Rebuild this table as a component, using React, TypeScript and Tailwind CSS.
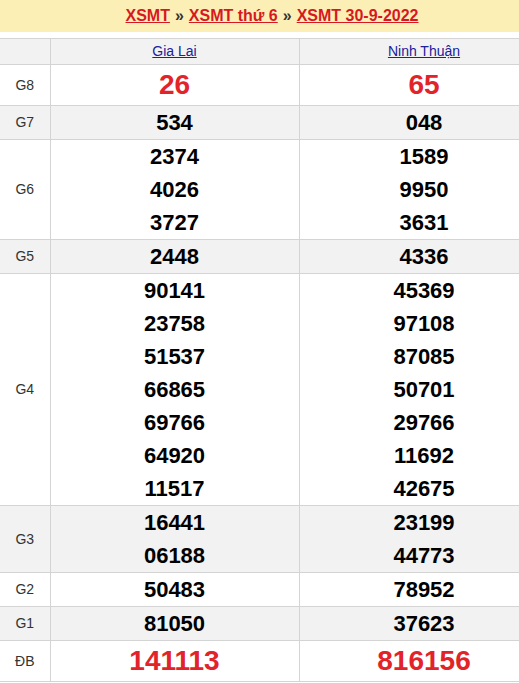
import React from 'react';

type Row = { label: string; a: string[]; b: string[]; big?: boolean; gray?: boolean };

const rows: Row[] = [
  { label: 'G8', a: ['26'], b: ['65'], big: true },
  { label: 'G7', a: ['534'], b: ['048'], gray: true },
  { label: 'G6', a: ['2374', '4026', '3727'], b: ['1589', '9950', '3631'] },
  { label: 'G5', a: ['2448'], b: ['4336'], gray: true },
  {
    label: 'G4',
    a: ['90141', '23758', '51537', '66865', '69766', '64920', '11517'],
    b: ['45369', '97108', '87085', '50701', '29766', '11692', '42675'],
  },
  { label: 'G3', a: ['16441', '06188'], b: ['23199', '44773'], gray: true },
  { label: 'G2', a: ['50483'], b: ['78952'] },
  { label: 'G1', a: ['81050'], b: ['37623'], gray: true },
  { label: 'ĐB', a: ['141113'], b: ['816156'], big: true },
];

const Cell = ({ nums, big }: { nums: string[]; big?: boolean }) => (
  <td className="border border-[#d4d4d4] text-center align-middle">
    {nums.map(n => (
      <div
        key={n}
        className={
          big
            ? 'text-[28px] leading-[40px] font-bold text-[#e3232a]'
            : 'text-[22px] leading-[33px] font-bold text-black'
        }
      >
        {n}
      </div>
    ))}
  </td>
);

export default function App() {
  return (
    <div className="w-[519px] overflow-hidden bg-white" style={{ fontFamily: '"Liberation Sans", Arial, sans-serif' }}>
      <div className="w-[549px]">
        <div className="w-[544px] h-[32px] bg-[#fcefb6] flex items-center justify-center text-[16px] font-bold">
          <a className="text-[#d7191f] underline">XSMT</a>
          <span className="mx-[5px] text-[#333]">»</span>
          <a className="text-[#d7191f] underline">XSMT thứ 6</a>
          <span className="mx-[5px] text-[#333]">»</span>
          <a className="text-[#d7191f] underline">XSMT 30-9-2022</a>
        </div>
        <table className="mt-[6px] w-[549px] border-collapse table-fixed">
          <colgroup>
            <col className="w-[50px]" />
            <col className="w-[249px]" />
            <col className="w-[250px]" />
          </colgroup>
          <thead>
            <tr className="bg-[#f2f2f2] h-[26px]">
              <th className="border border-l-0 border-[#d4d4d4]"></th>
              <th className="border border-[#d4d4d4] text-[14px] font-normal">
                <a className="text-[#20209a] underline">Gia Lai</a>
              </th>
              <th className="border border-[#d4d4d4] text-[14px] font-normal">
                <a className="text-[#20209a] underline">Ninh Thuận</a>
              </th>
            </tr>
          </thead>
          <tbody>
            {rows.map(r => (
              <tr key={r.label} className={r.gray ? 'bg-[#f2f2f2]' : 'bg-white'}>
                <td className="border border-l-0 border-[#d4d4d4] text-center text-[14px] text-[#333]">{r.label}</td>
                <Cell nums={r.a} big={r.big} />
                <Cell nums={r.b} big={r.big} />
              </tr>
            ))}
          </tbody>
        </table>
      </div>
    </div>
  );
}
